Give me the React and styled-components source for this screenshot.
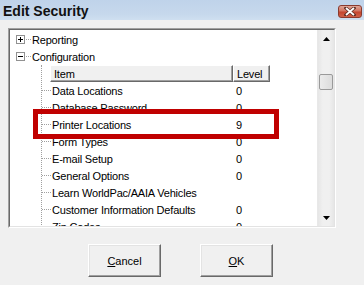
import React from "react";
import styled, { createGlobalStyle } from "styled-components";

const Global = createGlobalStyle`
  html, body { margin: 0; padding: 0; background: #f0f0f0; }
  body { font-family: "Liberation Sans", Arial, sans-serif; }
`;

const Window = styled.div`
  width: 364px;
  height: 285px;
  background: #f0f0f0;
  display: flex;
  flex-direction: column;
  overflow: hidden;
`;

const TitleBar = styled.div`
  height: 20px;
  flex: none;
  display: flex;
  align-items: center;
  justify-content: space-between;
  padding: 0 2px 0 3px;
  background: linear-gradient(#bfd3ea, #c6d8ec 70%, #cfdff0);
`;

const Title = styled.div`
  font-family: "Liberation Sans", Arial, sans-serif;
  font-weight: bold;
  font-size: 14px;
  color: #111;
  margin-top: 1px;
`;

const CloseBtn = styled.div`
  width: 24px;
  height: 13px;
  margin-top: 2px;
  border: 1px solid #8a3a2e;
  border-radius: 3px;
  background: linear-gradient(#e0a698, #d2735f 45%, #c4452e 55%, #d06048);
  display: flex;
  align-items: center;
  justify-content: center;
  box-sizing: border-box;
`;

const Body = styled.div`
  padding: 8px 0 0 8px;
  display: flex;
  flex-direction: column;
`;

const Panel = styled.div`
  position: relative;
  width: 328px;
  height: 200px;
  box-sizing: border-box;
  border-top: 1px solid #a0a0a0;
  border-left: 1px solid #a0a0a0;
  border-right: 1px solid #ffffff;
  border-bottom: 1px solid #ffffff;
  display: flex;
`;

const PanelInner = styled.div`
  flex: 1;
  display: flex;
  border-top: 1px solid #696969;
  border-left: 1px solid #696969;
  border-right: 1px solid #e3e3e3;
  border-bottom: 1px solid #e3e3e3;
  background: #fff;
  overflow: hidden;
`;

const Tree = styled.div`
  flex: 1;
  padding-top: 1px;
  overflow: hidden;
  font-size: 11px;
  letter-spacing: -0.2px;
  color: #000;
`;

const TopRow = styled.div`
  height: 17px;
  display: flex;
  align-items: center;
  padding-left: 6px;
`;

const Expander = styled.svg`
  width: 9px;
  height: 9px;
  flex: none;
`;

const HDots = styled.span`
  width: ${(p) => p.$w}px;
  margin-left: ${(p) => p.$ml || 0}px;
  flex: none;
  align-self: center;
  border-top: 1px dotted #a0a0a0;
`;

const TopLabel = styled.span`
  margin-left: 1px;
  white-space: nowrap;
`;

const ChildGroup = styled.div`
  margin-left: 31px;
  border-left: 1px dotted #a0a0a0;
`;

const HeaderRow = styled.div`
  height: 17px;
  display: flex;
  margin-left: 8px;
`;

const HeaderCell = styled.div`
  width: ${(p) => p.$w}px;
  box-sizing: border-box;
  background: #f0f0f0;
  border-top: 1px solid #fff;
  border-left: 1px solid #fff;
  border-right: 1px solid #696969;
  border-bottom: 1px solid #696969;
  box-shadow: inset -1px -1px 0 #a0a0a0;
  padding-left: 3px;
  display: flex;
  align-items: center;
  white-space: nowrap;
`;

const ChildRow = styled.div`
  height: 17px;
  display: flex;
  align-items: center;
`;

const NameCell = styled.span`
  width: 182px;
  padding-left: 1px;
  white-space: nowrap;
`;

const LevelCell = styled.span`
  padding-left: 2px;
`;

const Scrollbar = styled.div`
  width: 17px;
  flex: none;
  display: flex;
  flex-direction: column;
  background: linear-gradient(90deg, #e6e6e6, #f0f0f0 30%, #f0f0f0 70%, #e6e6e6);
  border-left: 1px solid #e8e8e8;
  box-sizing: border-box;
`;

const Arrow = styled.div`
  height: 17px;
  display: flex;
  align-items: center;
  justify-content: center;
  flex: none;
`;

const Track = styled.div`
  flex: 1;
  padding-top: 27px;
`;

const Thumb = styled.div`
  height: 16px;
  margin: 0 1px;
  border: 1px solid #9a9a9a;
  border-radius: 2px;
  background: linear-gradient(90deg, #ececec, #dcdcdc);
  box-sizing: border-box;
`;

const Highlight = styled.div`
  position: absolute;
  left: 24px;
  top: 80px;
  width: 246px;
  height: 30px;
  box-sizing: border-box;
  border: 5px solid #c00000;
  pointer-events: none;
`;

const Buttons = styled.div`
  display: flex;
  gap: 39px;
  padding-left: 80px;
  margin-top: 16px;
`;

const Button = styled.div`
  width: 73px;
  height: 33px;
  box-sizing: border-box;
  background: #f0f0f0;
  border-top: 1px solid #fff;
  border-left: 1px solid #fff;
  border-right: 1px solid #696969;
  border-bottom: 1px solid #696969;
  box-shadow: inset -1px -1px 0 #a0a0a0, inset 1px 1px 0 #e3e3e3;
  display: flex;
  align-items: center;
  justify-content: center;
  font-size: 11px;
  color: #000;
`;

const U = styled.span`
  text-decoration: underline;
`;

const Box = ({ open }) => (
  <Expander viewBox="0 0 9 9">
    <rect x="0.5" y="0.5" width="8" height="8" fill="#fff" stroke="#919191" />
    <line x1="2" y1="4.5" x2="7" y2="4.5" stroke="#000" />
    {!open && <line x1="4.5" y1="2" x2="4.5" y2="7" stroke="#000" />}
  </Expander>
);

const items = [
  ["Data Locations", "0"],
  ["Database Password", "0"],
  ["Printer Locations", "9"],
  ["Form Types", "0"],
  ["E-mail Setup", "0"],
  ["General Options", "0"],
  ["Learn WorldPac/AAIA Vehicles", ""],
  ["Customer Information Defaults", "0"],
  ["Zip Codes", "0"],
];

export default function App() {
  return (
    <>
      <Global />
      <Window>
        <TitleBar>
          <Title>Edit Security</Title>
          <CloseBtn>
            <svg width="12" height="9" viewBox="0 0 12 9">
              <path d="M2 1 L10 8 M10 1 L2 8" stroke="#5a2a22" strokeWidth="3.2" strokeLinecap="square" />
              <path d="M2 1 L10 8 M10 1 L2 8" stroke="#fff" strokeWidth="1.8" />
            </svg>
          </CloseBtn>
        </TitleBar>
        <Body>
          <Panel>
            <PanelInner>
              <Tree>
                <TopRow>
                  <Box />
                  <HDots $w={5} $ml={1} />
                  <TopLabel>Reporting</TopLabel>
                </TopRow>
                <TopRow>
                  <Box open />
                  <HDots $w={5} $ml={1} />
                  <TopLabel>Configuration</TopLabel>
                </TopRow>
                <ChildGroup>
                  <HeaderRow>
                    <HeaderCell $w={183}>Item</HeaderCell>
                    <HeaderCell $w={37}>Level</HeaderCell>
                  </HeaderRow>
                  {items.map(([name, lvl]) => (
                    <ChildRow key={name}>
                      <HDots $w={9} />
                      <NameCell>{name}</NameCell>
                      <LevelCell>{lvl}</LevelCell>
                    </ChildRow>
                  ))}
                </ChildGroup>
              </Tree>
              <Scrollbar>
                <Arrow>
                  <svg width="7" height="4" viewBox="0 0 7 4">
                    <path d="M3.5 0 L7 4 L0 4 Z" fill="#000" />
                  </svg>
                </Arrow>
                <Track>
                  <Thumb />
                </Track>
                <Arrow>
                  <svg width="7" height="4" viewBox="0 0 7 4">
                    <path d="M0 0 L7 0 L3.5 4 Z" fill="#000" />
                  </svg>
                </Arrow>
              </Scrollbar>
            </PanelInner>
            <Highlight />
          </Panel>
          <Buttons>
            <Button><span><U>C</U>ancel</span></Button>
            <Button><span><U>O</U>K</span></Button>
          </Buttons>
        </Body>
      </Window>
    </>
  );
}
